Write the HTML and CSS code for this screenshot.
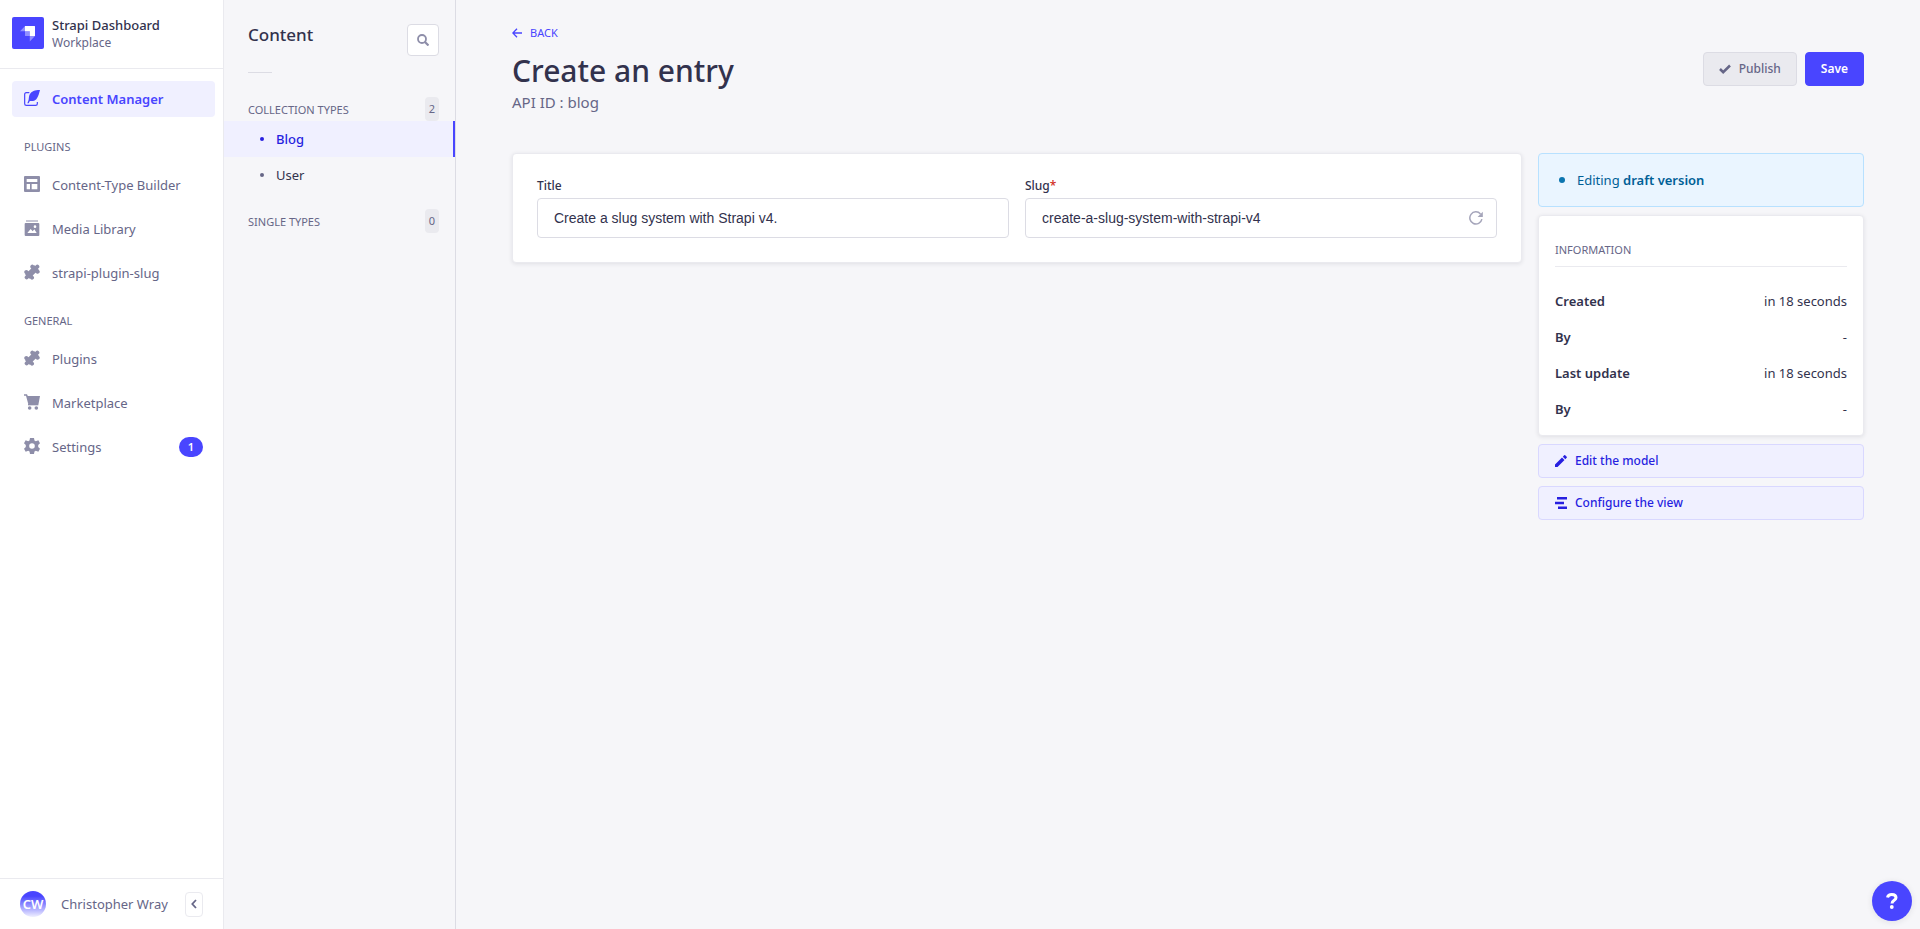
FILE: index.html
```html
<!DOCTYPE html>
<html lang="en">
<head>
<meta charset="utf-8">
<title>Create an entry</title>
<link rel="stylesheet" href="styles.css">
</head>
<body>
<svg class="defs" aria-hidden="true">
  <symbol id="puzzle" viewBox="0 0 24 24"><path d="M19 5L5 19" stroke="currentColor" stroke-width="9"/><path d="M20 4L4 20M12.500 4L20.500 11.500M3.500 12l8.500 8.500" fill="none" stroke="currentColor" stroke-width="6" stroke-linecap="round"/></symbol>
</svg>
<div class="app">
  <nav class="nav" aria-label="Main">
    <header class="brand">
      <svg class="brand-logo" viewBox="0 0 32 32" aria-hidden="true"><rect width="32" height="32" rx="2" fill="#4945ff"/><path fill="#fff" d="M13 9h9.500q.5 0 .5.500V19h-5.200v-4.800H13z"/><path fill="#fff" opacity=".4" d="M13 9v5.200H8zM17.800 19H23l-5.200 5.500zM13 14.200h4.800V19h-4.300q-.5 0-.5-.5z"/></svg>
      <div><strong class="brand-name">Strapi Dashboard</strong><span class="brand-sub">Workplace</span></div>
    </header>
    <div class="nav-body">
      <a class="nav-link active" href="#"><svg class="icon" viewBox="0 0 24 24"><path d="M8 4H3.500Q1 4 1 6.500v14Q1 23 3.500 23h14q2.500 0 2.500-2.500V18" fill="none" stroke="currentColor" stroke-width="1.800"/><path d="M24 0c-7-.4-15 1.800-16.500 10-.4 2.200-.2 4-.9 5.600L5 20h2l1.700-3.500c4 .4 7.800-.2 9.800-2.600 3.300-4 4.200-9.400 5.500-13.900z"/></svg>Content Manager</a>
      <h2 class="nav-title">Plugins</h2>
      <a class="nav-link" href="#"><svg class="icon" viewBox="0 0 24 24"><path fill-rule="evenodd" d="M1.500 0h21Q24 0 24 1.500v21q0 1.500-1.500 1.500h-21Q0 24 0 22.500v-21Q0 0 1.500 0zM4 4.500V9h16V4.500zM4 12v8h5v-8zm7.500 0v8H20v-8z"/></svg>Content-Type Builder</a>
      <a class="nav-link" href="#"><svg class="icon" viewBox="0 0 24 24"><path opacity=".5" d="M3 0h18v3H3z"/><path fill-rule="evenodd" d="M2.500 4.500h19q1.500 0 1.500 1.500v16.500q0 1.500-1.500 1.500h-19Q1 24 1 22.500V6q0-1.500 1.500-1.500zM5 19.500h14l-3.500-5.500-2.500 3-3-3.500zM16.500 8a2 2 0 100 4 2 2 0 000-4z"/></svg>Media Library</a>
      <a class="nav-link" href="#"><svg class="icon"><use href="#puzzle"/></svg>strapi-plugin-slug</a>
      <h2 class="nav-title">General</h2>
      <a class="nav-link" href="#"><svg class="icon"><use href="#puzzle"/></svg>Plugins</a>
      <a class="nav-link" href="#"><svg class="icon" viewBox="0 0 24 24"><path d="M0 .5h4.500L5.700 3H24l-2.300 12.500H6.500L3 2.500H0z"/><path d="M6 15h15.500v2H6z"/><circle cx="8.500" cy="21" r="2.700"/><circle cx="18.500" cy="21" r="2.700"/></svg>Marketplace</a>
      <a class="nav-link" href="#"><svg class="icon" viewBox="0 0 24 24"><path fill-rule="evenodd" d="M9 0h6l.7 3.600 2 1.200L21.500 3.400 24 8l-2.700 2.500v3L24 16l-2.500 4.600-3.800-1.400-2 1.200L15 24H9l-.7-3.600-2-1.200-3.800 1.400L0 16l2.700-2.500v-3L0 8l2.500-4.600 3.800 1.400 2-1.200zM12 7.800a4.200 4.200 0 100 8.400 4.200 4.200 0 000-8.400z"/></svg>Settings<span class="count">1</span></a>
    </div>
    <footer class="user">
      <span class="avatar">CW</span><span class="user-name">Christopher Wray</span>
      <button class="collapse" aria-label="Collapse the navigation"><svg viewBox="0 0 6 10" width="6" height="10"><path d="M5 1L1.300 5 5 9" fill="none" stroke="currentColor" stroke-width="1.800"/></svg></button>
    </footer>
  </nav>

  <aside class="subnav">
    <div class="subnav-head"><h2>Content</h2><button class="search" aria-label="Search"><svg viewBox="0 0 12 12" width="12" height="12" fill="none" stroke="currentColor" stroke-width="1.800"><circle cx="5" cy="5" r="4"/><path d="M8 8l3.500 3.500" stroke-width="2.200"/></svg></button></div>
    <hr class="subnav-rule">
    <section class="group">
      <h3>Collection Types<span>2</span></h3>
      <ul><li><a class="current" href="#">Blog</a></li><li><a href="#">User</a></li></ul>
    </section>
    <section class="group"><h3>Single Types<span>0</span></h3></section>
  </aside>

  <main class="main">
    <a class="back" href="#"><svg viewBox="0 0 10 10" width="10" height="10" fill="none" stroke="currentColor" stroke-width="1.300"><path d="M10 5H1M5 .7L.8 5 5 9.300"/></svg>Back</a>
    <div class="title-row">
      <h1>Create an entry</h1>
      <div class="actions">
        <button class="btn publish" disabled><svg viewBox="0 0 12 12" width="12" height="12"><path d="M1 6l3.200 3.200L11 2.500" fill="none" stroke="currentColor" stroke-width="2.500"/></svg>Publish</button>
        <button class="btn save">Save</button>
      </div>
    </div>
    <p class="subtitle">API ID : blog</p>
    <div class="layout">
      <form class="card form">
        <div class="field"><label for="title">Title</label><div class="box"><input id="title" value="Create a slug system with Strapi v4."></div></div>
        <div class="field"><label for="slug">Slug<span class="required">*</span></label><div class="box"><input id="slug" value="create-a-slug-system-with-strapi-v4"><button type="button" class="regen" aria-label="Regenerate"><svg viewBox="0 0 14 14" width="14" height="14"><path d="M12.900 8.200A6.100 6.100 0 1 1 11.500 2.900" fill="none" stroke="currentColor" stroke-width="1.500"/><path d="M13.800.8V6H8.600z" fill="currentColor"/></svg></button></div></div>
      </form>
      <aside class="side">
        <div class="status"><p>Editing <b>draft version</b></p></div>
        <section class="card info">
          <h2>Information</h2>
          <dl>
            <div><dt>Created</dt><dd>in 18 seconds</dd></div>
            <div><dt>By</dt><dd>-</dd></div>
            <div><dt>Last update</dt><dd>in 18 seconds</dd></div>
            <div><dt>By</dt><dd>-</dd></div>
          </dl>
        </section>
        <a class="btn link" href="#"><svg viewBox="0 0 12 12" width="12" height="12" fill="currentColor"><path d="M0 9.500V12h2.500l7-7L7 2.500zM7.800 1.700l2.500 2.500 1.400-1.400q.5-.5 0-1L10.200.3q-.5-.5-1 0z"/></svg>Edit the model</a>
        <a class="btn link" href="#"><svg viewBox="0 0 12 12" width="12" height="12" fill="currentColor"><path d="M2 0h10v2.600H2zM0 4.700h9v2.600H0zM3 9.400h9V12H3z"/></svg>Configure the view</a>
      </aside>
    </div>
  </main>
</div>
<button class="help" aria-label="Help"><svg viewBox="0 0 12 16" width="12" height="16"><path d="M1.500 4.500C2 2.500 3.500 1.600 5.800 1.600c2.600 0 4.200 1.300 4.200 3.200C10 7.400 6 7.300 6 10.500" fill="none" stroke="currentColor" stroke-width="3"/><circle cx="5.800" cy="14" r="1.900" fill="currentColor"/></svg></button>
</body>
</html>
```
FILE: styles.css
```css
* { box-sizing: border-box; }
body, h1, h2, h3, p, ul, dl, dd { margin: 0; padding: 0; }
body { font: 13px/20px "Noto Sans", sans-serif; color: #32324d; background: #f6f6f9; }
a { color: inherit; text-decoration: none; }
ul { list-style: none; }
button, input { font: inherit; color: inherit; margin: 0; }
svg { display: block; flex: none; }
.defs { position: absolute; width: 0; height: 0; }
.app { display: grid; grid-template-columns: 224px 232px 1fr; min-height: 100vh; }

.nav { display: flex; flex-direction: column; background: #fff; border-right: 1px solid #eaeaef; color: #666687; }
.brand { display: flex; align-items: center; gap: 8px; height: 69px; padding: 0 12px 2px; border-bottom: 1px solid #eaeaef; }
.brand-logo { width: 32px; height: 32px; }
.brand-name { display: block; color: #32324d; font-weight: 500; line-height: 18px; padding-top: 2px; }
.brand-sub { display: block; font-size: 12px; line-height: 18px; }
.nav-body { flex: 1; padding: 12px 8px 12px 12px; }
.nav-link { display: flex; align-items: center; gap: 12px; height: 36px; margin-bottom: 8px; padding: 0 12px; border-radius: 4px; }
.nav-link.active { background: #f0f0ff; color: #4945ff; font-weight: 600; margin-bottom: 20px; }
.icon { width: 16px; height: 16px; margin-bottom: 2px; color: #8e8ea9; fill: currentColor; }
.active .icon { color: #4945ff; }
.nav-title { font-size: 11px; font-weight: 400; line-height: 20px; text-transform: uppercase; padding: 0 12px; margin: 20px 0 10px; }
.count { margin-left: auto; min-width: 24px; height: 20px; border-radius: 10px; background: #4945ff; color: #fff; font-size: 11px; font-weight: 600; text-align: center; }
.user { display: flex; align-items: center; height: 51px; padding: 0 20px; border-top: 1px solid #eaeaef; white-space: nowrap; }
.avatar { flex: none; width: 26px; height: 26px; margin-right: 15px; border-radius: 50%; background: linear-gradient(#4945ff 20%, #f0f0ff); color: #fff; font-size: 13px; font-weight: 600; line-height: 26px; text-align: center; }
.collapse { flex: none; display: grid; place-items: center; width: 18px; height: 25px; margin-left: auto; padding: 0; background: #fff; border: 1px solid #eaeaef; border-radius: 4px; }

.subnav { border-right: 1px solid #dcdce4; }
.subnav-head { display: flex; justify-content: space-between; padding: 24px 16px 16px 24px; }
.subnav-head h2 { font-size: 17px; font-weight: 500; line-height: 22px; }
.search { display: grid; place-items: center; width: 32px; height: 32px; padding: 0; background: #fff; border: 1px solid #dcdce4; border-radius: 4px; color: #8e8ea9; }
.subnav-rule { width: 24px; height: 1px; margin: 0 24px 24px; border: 0; background: #dcdce4; }
.group { margin-bottom: 16px; }
.group h3 { display: flex; align-items: flex-end; justify-content: space-between; height: 24px; padding: 0 16px 0 24px; color: #666687; font-size: 11px; font-weight: 400; line-height: 22px; text-transform: uppercase; }
.group h3 span { width: 14px; background: #eaeaef; border-radius: 4px; line-height: 24px; text-align: center; }
.group a { display: flex; align-items: center; gap: 12px; height: 36px; padding-left: 36px; }
.group a::before { content: ""; width: 4px; height: 4px; border-radius: 50%; background: #666687; }
.group a.current { background: #f0f0ff; color: #271fe0; font-weight: 500; border-right: 2px solid #4945ff; }
.group a.current::before { background: #271fe0; }

.main { padding: 24px 56px; min-width: 0; }
.back { display: inline-flex; align-items: center; gap: 8px; height: 18px; color: #4945ff; font-size: 11px; text-transform: uppercase; vertical-align: top; }
.title-row { display: flex; align-items: flex-start; justify-content: space-between; padding-top: 8px; }
h1 { font-size: 30px; font-weight: 500; line-height: 38px; }
.actions { display: flex; gap: 8px; }
.btn { display: flex; align-items: center; gap: 8px; height: 34px; padding: 0 15px; border: 1px solid #4945ff; border-radius: 4px; font-size: 12px; font-weight: 600; }
.publish { background: #eaeaef; border-color: #dcdce4; color: #666687; font-weight: 500; }
.save { background: #4945ff; color: #fff; }
.subtitle { font-size: 15px; line-height: 24px; color: #666687; margin-bottom: 39px; }
.layout { display: grid; grid-template-columns: repeat(12, 1fr); gap: 16px; align-items: start; }
.card { background: #fff; border: 1px solid #eaeaef; border-radius: 4px; box-shadow: 0 1px 4px rgba(33, 33, 52, .1); }
.form { grid-column: span 9; display: grid; grid-template-columns: 1fr 1fr; gap: 16px; padding: 24px; }
.field label { display: block; font-size: 12px; font-weight: 500; line-height: 16px; margin-bottom: 4px; }
.required { color: #d02b20; }
.box { display: flex; align-items: center; height: 40px; border: 1px solid #dcdce4; border-radius: 4px; padding: 0 16px; }
.box input { flex: 1; min-width: 0; border: 0; padding: 0; background: none; font: 14px/20px "Liberation Sans", Arial, sans-serif; outline: none; }
.regen { padding: 0; border: 0; background: none; color: #a5a5ba; margin-right: -3px; }
.side { grid-column: span 3; display: grid; gap: 8px; }
.status { display: flex; align-items: center; gap: 12px; height: 54px; padding: 0 20px; background: #eaf5ff; border: 1px solid #b8e1ff; border-radius: 4px; color: #006096; }
.status::before { content: ""; width: 6px; height: 6px; border-radius: 50%; background: #0c75af; }
.status b { font-weight: 600; }
.info { padding: 24px 16px 16px; }
.info h2 { padding-bottom: 6px; border-bottom: 1px solid #eaeaef; color: #666687; font-size: 11px; font-weight: 400; line-height: 20px; text-transform: uppercase; }
.info dl { display: grid; gap: 16px; padding-top: 24px; }
.info dl div { display: flex; justify-content: space-between; }
.info dt { font-weight: 600; }
.link { padding: 0 16px; background: #f0f0ff; border-color: #d9d8ff; color: #271fe0; font-weight: 500; }
.help { position: fixed; right: 8px; bottom: 8px; display: grid; place-items: center; width: 40px; height: 40px; padding: 0; border: 0; border-radius: 50%; background: #4945ff; color: #fff; box-shadow: 0 1px 6px rgba(33, 33, 52, .1); }
```
